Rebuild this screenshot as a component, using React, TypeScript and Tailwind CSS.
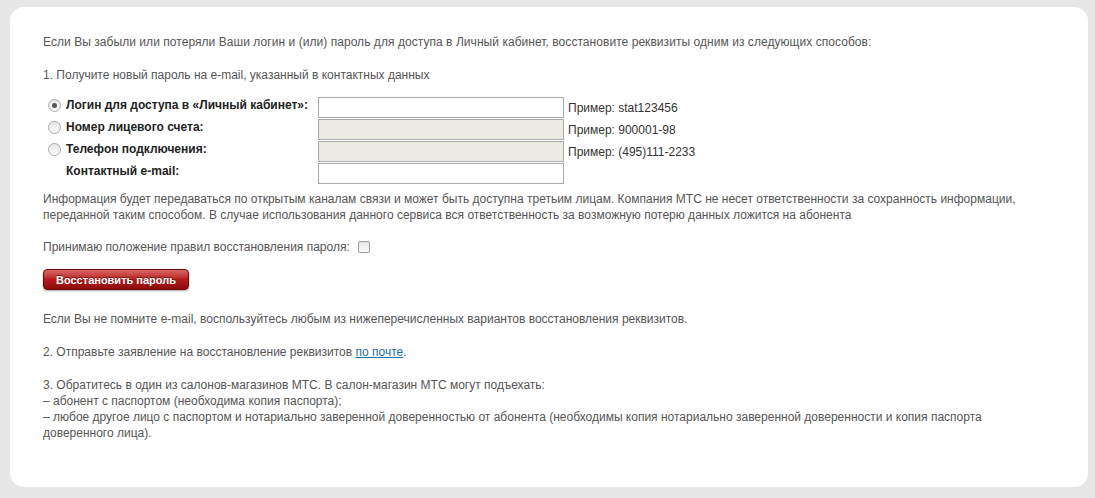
import React from "react"

const rows = [
    { label: "Логин для доступа в «Личный кабинет»:", radio: true, checked: true, disabled: false, hint: "Пример: stat123456" },
    { label: "Номер лицевого счета:", radio: true, checked: false, disabled: true, hint: "Пример: 900001-98" },
    { label: "Телефон подключения:", radio: true, checked: false, disabled: true, hint: "Пример: (495)111-2233" },
    { label: "Контактный e-mail:", radio: false, checked: false, disabled: false, hint: "" },
]

const Radio = ({ checked }: { checked: boolean }) => (
    <span className="flex h-[13px] w-[13px] items-center justify-center rounded-full border border-[#a9a9a9] bg-gradient-to-b from-[#e6e6e6] to-[#fafafa]">
        {checked && <span className="h-[5px] w-[5px] rounded-full bg-[#555]" />}
    </span>
)

const App = () => {
    return (
        <div className="min-h-[498px] bg-[#e7e7e7] pl-[10px] pr-[7px] pt-[7px]" style={{ fontFamily: '"Liberation Sans", Arial, sans-serif' }}>
            <div className="h-[480px] w-[1078px] rounded-[14px] bg-white pl-[33px] pr-[55px] pt-[27px] text-[12px] leading-[16px] text-[#555]">
                <p className="tracking-[0.05px]">Если Вы забыли или потеряли Ваши логин и (или) пароль для доступа в Личный кабинет, восстановите реквизиты одним из следующих способов:</p>
                <p className="mt-[17px]">1. Получите новый пароль на e-mail, указанный в контактных данных</p>

                <div className="mt-[14px] flex flex-col">
                    {rows.map((r) => (
                        <div key={r.label} className="flex h-[22px]">
                            <div className="flex w-[23px] justify-end pt-[2px] pr-[5px]">
                                {r.radio && <Radio checked={r.checked} />}
                            </div>
                            <div className="w-[252px] font-bold text-[#222]">{r.label}</div>
                            <div className={`h-[21px] w-[246px] border border-[#a9a9a9] ${r.disabled ? "bg-[#ebebe4]" : "bg-white"}`} />
                            <div className="ml-[4px] pt-[3px] text-[#333]">{r.hint}</div>
                        </div>
                    ))}
                </div>

                <p className="mt-[6px]">Информация будет передаваться по открытым каналам связи и может быть доступна третьим лицам. Компания МТС не несет ответственности за сохранность информации, переданной таким способом. В случае использования данного сервиса вся ответственность за возможную потерю данных ложится на абонента</p>

                <div className="mt-[16px] flex items-center">
                    <span>Принимаю положение правил восстановления пароля:</span>
                    <span className="ml-[8px] h-[12px] w-[12px] rounded-[2px] border border-[#9a9a9a] bg-gradient-to-b from-[#e6e6e6] to-[#fbfbfb]" />
                </div>

                <button className="mt-[14px] flex h-[21px] w-[146px] items-center justify-center rounded-[4px] border border-[#6e0b0b] bg-gradient-to-b from-[#d86767] via-[#b51a1a] to-[#8c0d0d] text-[11px] font-bold text-white shadow-[0_1px_2px_rgba(0,0,0,0.35)] [text-shadow:0_-1px_0_rgba(0,0,0,0.45)]">
                    Восстановить пароль
                </button>

                <p className="mt-[21px]">Если Вы не помните e-mail, воспользуйтесь любым из нижеперечисленных вариантов восстановления реквизитов.</p>
                <p className="mt-[17px]">
                    2. Отправьте заявление на восстановление реквизитов <a className="text-[#1d6fa5] underline">по почте</a>.
                </p>
                <p className="mt-[17px]">
                    3. Обратитесь в один из салонов-магазинов МТС. В салон-магазин МТС могут подъехать:
                    <br />– абонент с паспортом (необходима копия паспорта);
                    <br />– любое другое лицо с паспортом и нотариально заверенной доверенностью от абонента (необходимы копия нотариально заверенной доверенности и копия паспорта доверенного лица).
                </p>
            </div>
        </div>
    )
}

export default App
